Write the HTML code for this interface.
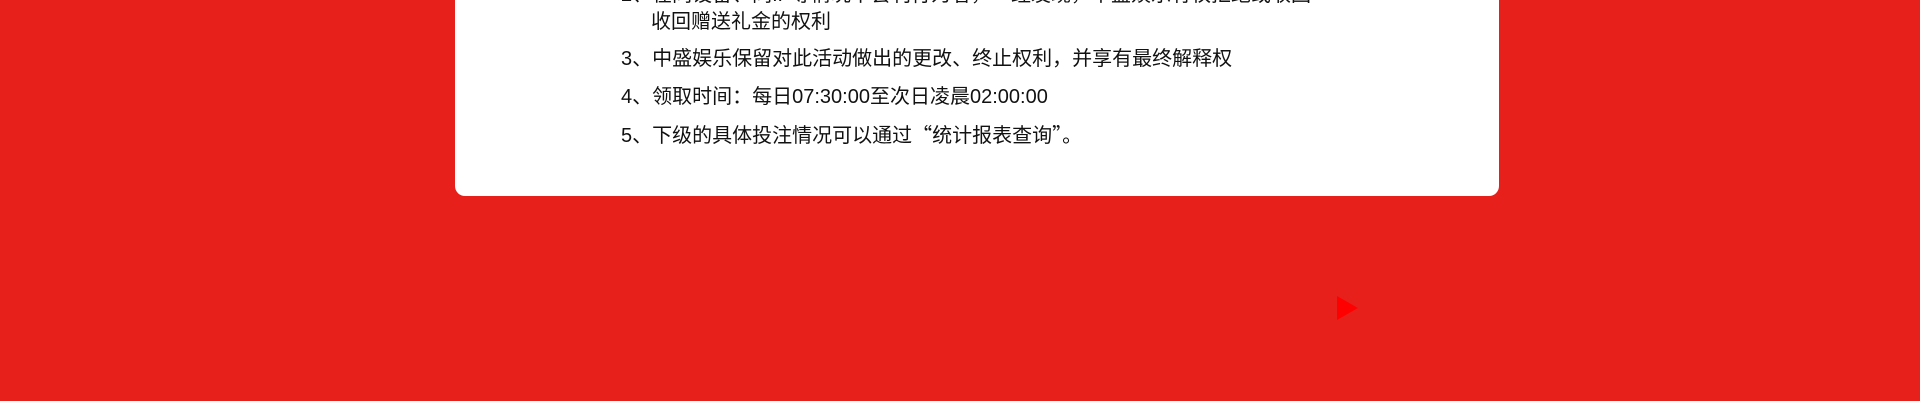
<!DOCTYPE html>
<html><head><meta charset="utf-8"><style>
html,body{margin:0;padding:0;width:1920px;height:401px;overflow:hidden;background:#e8201b;}
.card{position:absolute;left:455px;top:-40px;width:1044px;height:236px;background:#fff;border-radius:0 0 10px 10px;}
.l{position:absolute;font-family:"Liberation Sans","Noto Sans CJK SC",sans-serif;font-size:20px;color:#111;white-space:nowrap;line-height:24px;}
.q{font-family:"Noto Sans CJK SC",sans-serif;}
.tri{position:absolute;left:1337px;top:296px;width:0;height:0;border-top:12px solid transparent;border-bottom:12px solid transparent;border-left:21px solid #ff0000;}
</style></head><body>
<div class="card"></div>
<div class="l" style="left:621px;top:-17px">2、在同设备、同IP等情况下套利行为者，一经发现，中盛娱乐有权拒绝或收回</div>
<div class="l" style="left:651px;top:10px">收回赠送礼金的权利</div>
<div class="l" style="left:621px;top:47px">3、中盛娱乐保留对此活动做出的更改、终止权利，并享有最终解释权</div>
<div class="l" style="left:621px;top:85px">4、领取时间：每日07:30:00至次日凌晨02:00:00</div>
<div class="l" style="left:621px;top:122px">5、下级的具体投注情况可以通过<span class="q">“</span>统计报表查询<span class="q">”</span>。</div>
<div class="tri"></div>
</body></html>
